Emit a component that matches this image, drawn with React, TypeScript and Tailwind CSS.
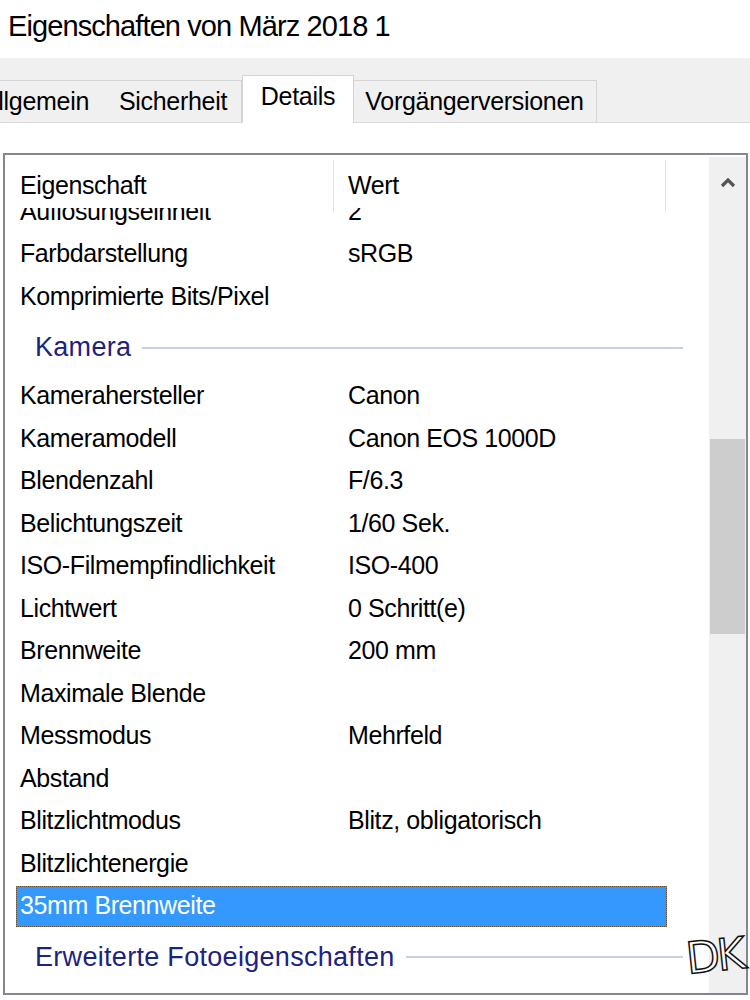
import React from "react";

type Row = { name: string; value?: string; selected?: boolean };

const before: Row[] = [
  { name: "Auflösungseinheit", value: "2" },
  { name: "Farbdarstellung", value: "sRGB" },
  { name: "Komprimierte Bits/Pixel" },
];

const camera: Row[] = [
  { name: "Kamerahersteller", value: "Canon" },
  { name: "Kameramodell", value: "Canon EOS 1000D" },
  { name: "Blendenzahl", value: "F/6.3" },
  { name: "Belichtungszeit", value: "1/60 Sek." },
  { name: "ISO-Filmempfindlichkeit", value: "ISO-400" },
  { name: "Lichtwert", value: "0 Schritt(e)" },
  { name: "Brennweite", value: "200 mm" },
  { name: "Maximale Blende" },
  { name: "Messmodus", value: "Mehrfeld" },
  { name: "Abstand" },
  { name: "Blitzlichtmodus", value: "Blitz, obligatorisch" },
  { name: "Blitzlichtenergie" },
  { name: "35mm Brennweite", selected: true },
];

function ListRow({ row }: { row: Row }) {
  if (row.selected) {
    return (
      <div className="h-[42.5px] flex items-center">
        <div className="ml-[11px] w-[651px] h-[41px] flex items-center bg-[#3399ff] border border-dotted border-[#6b4e2e] text-white">
          <div className="w-[316px] pl-[3px] whitespace-nowrap">{row.name}</div>
          <div className="pl-[15px] whitespace-nowrap">{row.value}</div>
        </div>
      </div>
    );
  }
  return (
    <div className="h-[42.5px] flex items-center">
      <div className="ml-[11px] w-[651px] flex items-center text-black">
        <div className="w-[317px] pl-[4px] whitespace-nowrap">{row.name}</div>
        <div className="pl-[15px] whitespace-nowrap">{row.value}</div>
      </div>
    </div>
  );
}

function Group({ title }: { title: string }) {
  return (
    <div className="h-[57.25px] flex items-center pt-[3px] pl-[30px] pr-[26px]">
      <span className="text-[27px] tracking-[0.3px] text-[#1c237f] whitespace-nowrap">{title}</span>
      <div className="flex-1 h-[2px] bg-[#c7d1e6] ml-[11px]" />
    </div>
  );
}

export default function App() {
  return (
    <div className="w-[750px] h-[1000px] bg-white overflow-hidden relative font-['Liberation_Sans',Arial,sans-serif] text-black">
      {/* Title */}
      <div className="h-[58px] flex items-center pl-[8px] pb-[4px] text-[29px] tracking-[-0.9px] whitespace-nowrap">
        Eigenschaften von März 2018 1
      </div>

      {/* Tab strip */}
      <div className="h-[65px] bg-[#f0f0f0] border-b border-[#d9d9d9] flex items-end text-[25px] tracking-[-0.3px]">
        <div className="ml-[-30px] w-[136px] h-[42px] flex items-center justify-end pr-[16px] border-l border-t border-r border-[#d4d4d4] bg-[#f0f0f0] whitespace-nowrap">
          Allgemein
        </div>
        <div className="ml-[-1px] w-[137px] h-[42px] flex items-center justify-center border-t border-r border-[#d4d4d4] bg-[#f0f0f0] whitespace-nowrap">
          Sicherheit
        </div>
        <div className="relative z-10 mb-[-1px] w-[112px] h-[48px] flex items-center justify-center pb-[6px] border-l border-t border-r border-[#d4d4d4] bg-white whitespace-nowrap">
          Details
        </div>
        <div className="ml-[-1px] w-[244px] h-[42px] flex items-center justify-center border-t border-r border-[#d4d4d4] bg-[#f0f0f0] whitespace-nowrap">
          Vorgängerversionen
        </div>
      </div>

      {/* List box */}
      <div className="pt-[30px] pl-[3px] pr-[2px]">
        <div className="h-[842px] border-2 border-[#828790] flex text-[25px] tracking-[-0.4px]">
          {/* main list */}
          <div className="w-[704px] flex flex-col">
            <div className="h-[53px] flex items-stretch bg-white shrink-0">
              <div className="w-[328px] pl-[15px] flex items-center pt-[8px] whitespace-nowrap">Eigenschaft</div>
              <div className="w-px bg-[#e3e3e3] mt-[5px] mb-[-5px]" />
              <div className="w-[331px] pl-[14px] flex items-center pt-[8px] whitespace-nowrap">Wert</div>
              <div className="w-px bg-[#e3e3e3] mt-[5px] mb-[-5px]" />
            </div>
            <div className="flex-1 overflow-hidden">
              <div className="mt-[-18px]">
                {before.map((r) => (
                  <ListRow key={r.name} row={r} />
                ))}
                <Group title="Kamera" />
                {camera.map((r) => (
                  <ListRow key={r.name} row={r} />
                ))}
                <Group title="Erweiterte Fotoeigenschaften" />
              </div>
            </div>
          </div>

          {/* scrollbar */}
          <div className="flex-1 bg-[#f0f0f0] flex flex-col items-center mt-[2px]">
            <div className="h-[50px] w-full flex items-center justify-center">
              <svg width="16" height="11" viewBox="0 0 16 11">
                <polyline points="2,9 8,3 14,9" fill="none" stroke="#555" strokeWidth="3.2" strokeLinejoin="miter" />
              </svg>
            </div>
            <div className="mt-[232px] w-[35px] h-[195px] bg-[#cdcdcd]" />
          </div>
        </div>
      </div>

      {/* DK watermark */}
      <div className="absolute left-[686px] top-[934px] text-[44px] font-['DejaVu_Sans',sans-serif] text-white tracking-[-3px] [-webkit-text-stroke:1.5px_#111] leading-none -rotate-6">
        DK
      </div>
    </div>
  );
}
